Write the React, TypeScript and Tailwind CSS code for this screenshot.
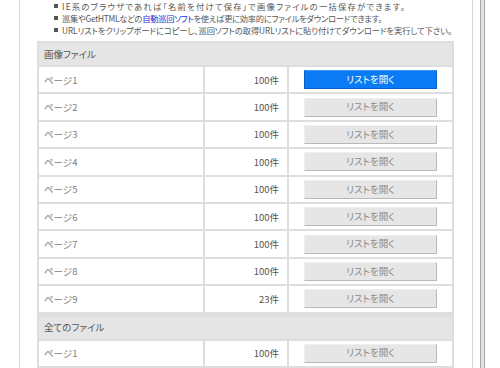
import React, { useLayoutEffect, useRef } from 'react';

const pages = [
  { label: 'ページ1', count: '100件', active: true },
  { label: 'ページ2', count: '100件' },
  { label: 'ページ3', count: '100件' },
  { label: 'ページ4', count: '100件' },
  { label: 'ページ5', count: '100件' },
  { label: 'ページ6', count: '100件' },
  { label: 'ページ7', count: '100件' },
  { label: 'ページ8', count: '100件' },
  { label: 'ページ9', count: '23件' },
];

type Row = { label: string; count: string; active?: boolean };

const ListRow: React.FC<{ row: Row }> = ({ row }) => (
  <>
    <div className="bg-white h-[25.4px] flex items-center pl-[5px] text-[#808080]">{row.label}</div>
    <div className="bg-white h-[25.4px] flex items-center justify-end pr-[8px] text-[#555]">{row.count}</div>
    <div className="bg-white h-[25.4px] flex items-center pl-[15px]">
      {row.active ? (
        <button className="w-[133px] h-[19px] bg-[#0b7bf5] border border-[#0a62c8] border-t-[#3b95f8] text-white leading-none">
          リストを開く
        </button>
      ) : (
        <button className="w-[133px] h-[19px] bg-[#e6e6e6] border border-[#efefef] border-r-[#b9b9b9] border-b-[#b9b9b9] text-[#8a8a8a] leading-none">
          リストを開く
        </button>
      )}
    </div>
  </>
);

const Header: React.FC<{ title: string; extra?: string }> = ({ title, extra = '' }) => (
  <div className={`col-span-3 bg-[#e5e5e5] h-[22px] flex items-center pl-[5px] text-[#555] ${extra}`}>{title}</div>
);

// target widths (px) of each note line, taken from the screenshot
const notes = [
  {
    width: 344,
    body: <>IE系のブラウザであれば「名前を付けて保存」で画像ファイルの一括保存ができます。</>,
  },
  {
    width: 320,
    body: (
      <>
        巡集やGetHTMLなどの<span className="text-[#1a2fd0]">自動巡回ソフト</span>を使えば更に効率的にファイルをダウンロードできます。
      </>
    ),
  },
  {
    width: 390,
    body: <>URLリストをクリップボードにコピーし、巡回ソフトの取得URLリストに貼り付けてダウンロードを実行して下さい。</>,
  },
];

const Note: React.FC<{ width: number; children: React.ReactNode }> = ({ width, children }) => {
  const ref = useRef<HTMLSpanElement>(null);
  useLayoutEffect(() => {
    const el = ref.current;
    if (!el) return;
    el.style.letterSpacing = '0px';
    const natural = el.getBoundingClientRect().width;
    const n = (el.textContent || '').length;
    if (n > 0) el.style.letterSpacing = `${(width - natural) / n}px`;
  }, [width]);
  return (
    <span ref={ref} className="inline-block shrink-0 h-[12px] leading-[12px] whitespace-nowrap text-[8.25px]">
      {children}
    </span>
  );
};

export default function App() {
  return (
    <div className="w-[500px] h-[368px] overflow-hidden bg-white flex font-['Noto_Sans_CJK_JP',sans-serif] [font-feature-settings:'palt'] text-[9.5px]">
      <div className="w-[19px] shrink-0" />
      <div className="w-[454px] shrink-0 border-l border-r border-[#d4d4d4] px-[17px]">
        <ul className="pl-[17px] text-[#555]">
          {notes.map((n, i) => (
            <li key={i} className="h-[12px] flex items-center gap-[4px] whitespace-nowrap">
              <span className="w-[4px] h-[4px] bg-[#555] shrink-0" />
              <Note width={n.width}>{n.body}</Note>
            </li>
          ))}
        </ul>
        <div className="mt-[5px] grid grid-cols-[164px_82px_163px] gap-[2px] bg-[#dedede] p-[2px] w-[417px]">
          <Header title="画像ファイル" />
          {pages.map((p) => (
            <ListRow key={p.label} row={p} />
          ))}
          <Header title="全てのファイル" extra="mt-[3px]" />
          <ListRow row={{ label: 'ページ1', count: '100件' }} />
        </div>
      </div>
      <div className="w-[7px] shrink-0" />
      <div className="w-[5px] shrink-0 border-l border-r border-[#a8a8a8] bg-[#e2e2e2]" />
    </div>
  );
}
